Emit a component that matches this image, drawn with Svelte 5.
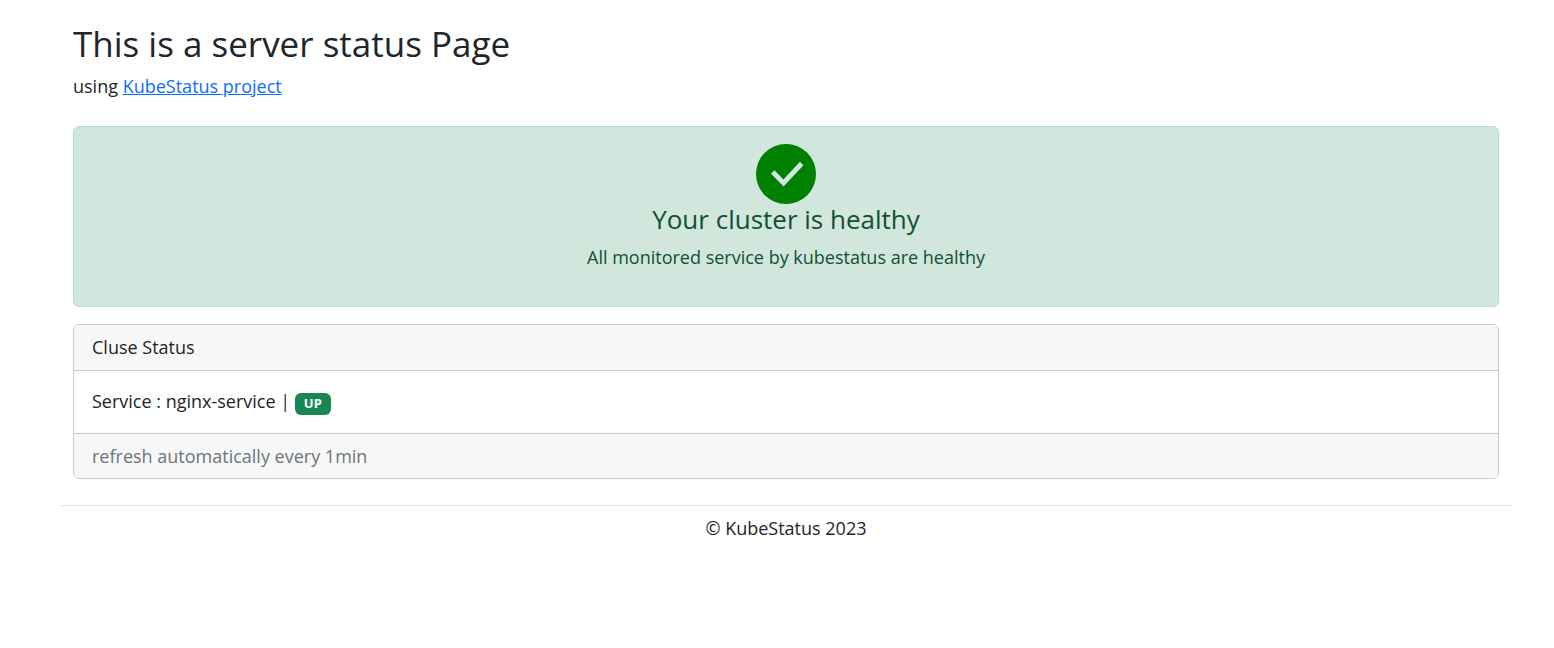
<script>
  const services = [{ name: 'nginx-service', status: 'UP' }];
</script>

<div class="container">
  <header>
    <h1>This is a server status Page</h1>
    <p>using <a href="#project">KubeStatus project</a></p>
  </header>

  <section class="alert">
    <svg viewBox="0 0 60 60" aria-hidden="true">
      <circle cx="30" cy="30" r="30" fill="#008000" />
      <path d="M16.7 28 27.5 39 45.7 19.5" fill="none" stroke="#d1e7dd" stroke-width="4.8" />
    </svg>
    <h2>Your cluster is healthy</h2>
    <p>All monitored service by kubestatus are healthy</p>
  </section>

  <section class="card">
    <div class="bar top">Cluse Status</div>
    <div class="body">
      {#each services as service}
        <div>Service : {service.name} | <span class="badge">{service.status}</span></div>
      {/each}
    </div>
    <div class="bar bottom">refresh automatically every 1min</div>
  </section>
</div>
<footer>© KubeStatus 2023</footer>

<style>
  :global(body) {
    margin: 0;
    background: #fff;
    color: #212529;
    font: 18px/27px "Open Sans", "Noto Sans", sans-serif;
  }
  .container {
    margin: 0 55px 0 73px;
    padding-top: 22px;
  }
  h1, h2, p {
    margin: 0;
    font-weight: 400;
  }
  h1 {
    font-size: 35px;
    line-height: 43px;
    margin-bottom: 8px;
  }
  a {
    color: #0d6efd;
  }
  .alert {
    margin-top: 26px;
    padding: 17px 18px 35px;
    border: 1px solid #badbcc;
    border-radius: 6px;
    background: #d1e7dd;
    color: #0f5132;
    text-align: center;
  }
  svg {
    display: block;
    width: 60px;
    height: 60px;
    margin: 0 auto;
  }
  h2 {
    font-size: 26px;
    line-height: 31px;
    margin-bottom: 9px;
  }
  .card {
    margin-top: 17px;
    border: 1px solid #ccc;
    border-radius: 6px;
    overflow: hidden;
  }
  .bar {
    padding: 9px 18px;
    background: #f7f7f7;
  }
  .top {
    border-bottom: 1px solid #ccc;
  }
  .bottom {
    padding-bottom: 8px;
    border-top: 1px solid #ccc;
    color: #6c757d;
  }
  .body {
    padding: 17px 18px 18px;
  }
  .badge {
    display: inline-block;
    padding: 4px 9px 5px;
    border-radius: 6px;
    background: #198754;
    color: #fff;
    font-size: 13px;
    font-weight: 700;
    line-height: 13px;
  }
  footer {
    margin: 26px 42px 0 60px;
    padding-top: 9px;
    border-top: 1px solid #dee2e6;
    text-align: center;
  }
</style>
